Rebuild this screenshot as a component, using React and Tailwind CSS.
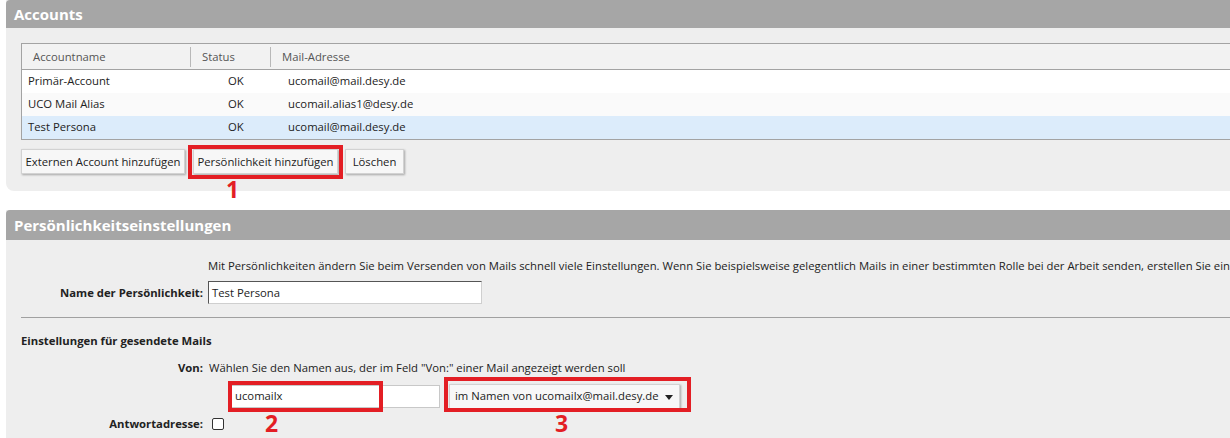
import React from "react";

const rows = [
  { name: "Primär-Account", status: "OK", mail: "ucomail@mail.desy.de", bg: "bg-white" },
  { name: "UCO Mail Alias", status: "OK", mail: "ucomail.alias1@desy.de", bg: "bg-[#fafafa]" },
  { name: "Test Persona", status: "OK", mail: "ucomail@mail.desy.de", bg: "bg-[#dcecfb]" },
];

function Btn({ children, w }) {
  return (
    <div
      className={`${w} h-[25px] flex items-center justify-center bg-[#f7f7f7] border border-[#d2d2d2] shadow-[1px_1px_2px_rgba(0,0,0,0.3)] text-[#222] whitespace-nowrap`}
    >
      {children}
    </div>
  );
}

export default function App() {
  return (
    <div className="w-[1230px] h-[438px] overflow-hidden bg-white font-['Open_Sans',sans-serif] text-[11.3px] text-[#222] leading-[16px]">
      {/* Accounts panel */}
      <div className="ml-[6px] w-[1240px] bg-[#eeeeee] rounded-b-[8px]">
        <div className="h-[28px] bg-[#a6a6a6] flex items-center pl-[8px] text-white font-bold text-[15px] rounded-t-[4px]">
          Accounts
        </div>
        <div className="pl-[15px] pt-[15px] pb-[17px]">
          <div className="border-t border-b border-l border-[#a3a3a3]">
            <div className="flex h-[26px] items-center bg-[#f2f2f2] border-b border-[#a3a3a3] text-[#555]">
              <div className="w-[169px] pl-[11px] h-[20px] flex items-center border-r border-[#b8b8b8]">Accountname</div>
              <div className="w-[80px] pl-[11px] h-[20px] flex items-center border-r border-[#b8b8b8]">Status</div>
              <div className="pl-[11px]">Mail-Adresse</div>
            </div>
            {rows.map((r, i) => (
              <div key={i} className={`flex h-[23px] items-center pb-[1px] ${r.bg}`}>
                <div className="w-[169px] pl-[6px]">{r.name}</div>
                <div className="w-[80px] pl-[37px]">{r.status}</div>
                <div className="pl-[17px]">{r.mail}</div>
              </div>
            ))}
          </div>
          <div className="relative mt-[9px] flex">
            <Btn w="w-[164px]">Externen Account hinzufügen</Btn>
            <div className="ml-[8px]">
              <Btn w="w-[145px]">Persönlichkeit hinzufügen</Btn>
            </div>
            <div className="ml-[7px]">
              <Btn w="w-[59px]">Löschen</Btn>
            </div>
            <div className="absolute left-[167px] top-[-4px] w-[155px] h-[34px] border-[4px] border-[#e31e24]" />
            <div className="absolute left-[205px] top-[28px] text-[#e31e24] font-bold text-[23px] leading-[24px]">1</div>
          </div>
        </div>
      </div>

      {/* Persönlichkeitseinstellungen panel */}
      <div className="mt-[19px] ml-[6px] w-[1240px] bg-[#eeeeee] h-[240px]">
        <div className="h-[30px] bg-[#a6a6a6] flex items-center pl-[8px] text-white font-bold text-[15px] rounded-t-[4px]">
          Persönlichkeitseinstellungen
        </div>
        <div className="pt-[18px]">
          <div className="flex">
            <div className="w-[197px] shrink-0" />
            <div className="ml-[5px] whitespace-nowrap">
              Mit Persönlichkeiten ändern Sie beim Versenden von Mails schnell viele Einstellungen. Wenn Sie beispielsweise gelegentlich Mails in einer bestimmten Rolle bei der Arbeit senden, erstellen Sie eine Persönlichkeit dafür.
            </div>
          </div>
          <div className="flex items-center mt-[7px]">
            <div className="w-[197px] shrink-0 text-right font-bold">Name der Persönlichkeit:</div>
            <div className="ml-[5px] w-[274px] h-[23px] bg-white border-t border-l border-t-[#555] border-l-[#555] border-b border-r border-b-[#cfcfcf] border-r-[#cfcfcf] flex items-center pl-[3px]">
              Test Persona
            </div>
          </div>
          <div className="ml-[15px] mt-[13px] border-t border-[#a0a0a0]" />
          <div className="ml-[15px] mt-[15px] font-bold">Einstellungen für gesendete Mails</div>
          <div className="flex items-center mt-[11px]">
            <div className="w-[197px] shrink-0 text-right font-bold">Von:</div>
            <div className="ml-[6px] whitespace-nowrap">
              Wählen Sie den Namen aus, der im Feld "Von:" einer Mail angezeigt werden soll
            </div>
          </div>
          <div className="relative flex items-center mt-[8px] h-[24px]">
            <div className="ml-[225px] w-[209px] h-[23px] bg-white border border-[#c8c8c8] flex items-center pl-[3px]">
              ucomailx
            </div>
            <div className="ml-[9px] w-[231px] h-[25px] bg-[#f7f7f7] border border-[#d2d2d2] shadow-[1px_1px_2px_rgba(0,0,0,0.3)] flex items-center pl-[5px] relative">
              im Namen von ucomailx@mail.desy.de
              <svg className="absolute right-[6px] top-[10px]" width="8" height="5" viewBox="0 0 8 5">
                <path d="M0 0 L8 0 L4 5 Z" fill="#222" />
              </svg>
            </div>
            <div className="absolute left-[222px] top-[-3px] w-[155px] h-[31px] border-[4px] border-[#e31e24]" />
            <div className="absolute left-[438px] top-[-7px] w-[247px] h-[35px] border-[4px] border-[#e31e24]" />
          </div>
          <div className="relative flex items-center mt-[8px] h-[16px]">
            <div className="w-[197px] shrink-0 text-right font-bold">Antwortadresse:</div>
            <div className="ml-[9px] w-[12px] h-[12px] bg-white border border-[#333] rounded-[2px]" />
            <div className="absolute left-[259px] top-[-5px] text-[#e31e24] font-bold text-[23px] leading-[24px]">2</div>
            <div className="absolute left-[549px] top-[-5px] text-[#e31e24] font-bold text-[23px] leading-[24px]">3</div>
          </div>
        </div>
      </div>
    </div>
  );
}
